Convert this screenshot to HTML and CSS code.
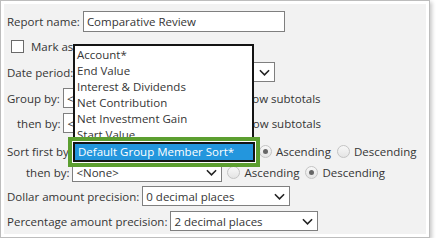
FILE: index.html
```html
<!DOCTYPE html>
<html lang="en">
<head>
  <meta charset="UTF-8" />
  <title>Report Settings</title>
  <link rel="stylesheet" href="styles.css">
</head>
<body>
  <div class="frame">
    <div class="panel">
      <div class="row row-name">
        <span class="label">Report name:</span>
        <div class="field name-field">Comparative Review</div>
      </div>

      <div class="row row-check">
        <span class="checkbox"></span>
        <span class="label">Mark as</span>
      </div>

      <div class="row row-date">
        <span class="label">Date period:</span>
        <div class="field select date-select"><span></span><svg class="chevron" viewBox="0 0 12 7"><path d="M1 1l5 5 5-5"/></svg></div>
      </div>

      <div class="row row-group">
        <span class="label">Group by:</span>
        <div class="field select group-select"><span>&lt;</span><svg class="chevron" viewBox="0 0 12 7"><path d="M1 1l5 5 5-5"/></svg></div>
        <span class="checkbox small-gap"></span>
        <span class="label">Show subtotals</span>
      </div>

      <div class="row row-then1">
        <span class="label indent">then by:</span>
        <div class="field select group-select"><span>&lt;</span><svg class="chevron" viewBox="0 0 12 7"><path d="M1 1l5 5 5-5"/></svg></div>
        <span class="checkbox small-gap"></span>
        <span class="label">Show subtotals</span>
      </div>

      <div class="row row-sort">
        <span class="label">Sort first by:</span>
        <div class="field select sort-select"><span></span><svg class="chevron" viewBox="0 0 12 7"><path d="M1 1l5 5 5-5"/></svg></div>
        <span class="radio checked"></span><span class="label">Ascending</span>
        <span class="radio"></span><span class="label">Descending</span>
      </div>

      <div class="row row-then2">
        <span class="label indent-more">then by:</span>
        <div class="field select then-select"><span>&lt;None&gt;</span><svg class="chevron" viewBox="0 0 12 7"><path d="M1 1l5 5 5-5"/></svg></div>
        <span class="radio"></span><span class="label">Ascending</span>
        <span class="radio checked"></span><span class="label">Descending</span>
      </div>

      <div class="row row-dollar">
        <span class="label">Dollar amount precision:</span>
        <div class="field select precision-select"><span>0 decimal places</span><svg class="chevron" viewBox="0 0 12 7"><path d="M1 1l5 5 5-5"/></svg></div>
      </div>

      <div class="row row-percent">
        <span class="label">Percentage amount precision:</span>
        <div class="field select precision-select"><span>2 decimal places</span><svg class="chevron" viewBox="0 0 12 7"><path d="M1 1l5 5 5-5"/></svg></div>
      </div>
    </div>

    <ul class="droplist">
      <li>Account*</li>
      <li>End Value</li>
      <li>Interest &amp; Dividends</li>
      <li>Net Contribution</li>
      <li>Net Investment Gain</li>
      <li>Start Value</li>
    </ul>

    <div class="highlight">
      <div class="highlight-item">Default Group Member Sort*</div>
    </div>
  </div>
</body>
</html>
```

FILE: styles.css
```css
body {
  margin: 0;
  background: #fff;
  font-family: "Open Sans", "Noto Sans", sans-serif;
  font-size: 11.5px;
  color: #353535;
}

.frame {
  position: relative;
  width: 430px;
  height: 238px;
  border: 1px solid #bdbdbd;
  padding: 3px;
  box-sizing: border-box;
  box-shadow: 2px 2px 4px rgba(0, 0, 0, 0.22);
  background: #fff;
}

.panel {
  background: #f2f2f2;
  height: 100%;
  padding: 7px 0 0 3px;
  box-sizing: border-box;
}

.row {
  display: flex;
  align-items: center;
  height: 20px;
  margin-top: 5px;
  white-space: nowrap;
}

.row-name { height: 21px; margin-top: 0; }
.row-check { margin-top: 4px; }
.row-date { margin-top: 6px; }
.row-group { margin-top: 6px; }
.row-sort { margin-top: 8px; }
.row-then2 { margin-top: 1px; }
.row-dollar { margin-top: 4px; }

.label {
  margin-right: 3px;
}

.indent { margin-left: 10px; }
.indent-more { margin-left: 19px; }

.field {
  height: 100%;
  box-sizing: border-box;
  border: 1px solid #7f7f7f;
  background: #fff;
  display: flex;
  align-items: center;
  padding: 0 4px 0 3px;
}

.name-field { width: 202px; }

.select {
  justify-content: space-between;
}

.chevron {
  width: 11px;
  height: 7px;
  fill: none;
  stroke: #222;
  stroke-width: 1.7;
}

.date-select { width: 199px; }
.group-select { width: 150px; }
.sort-select { width: 181px; margin-right: 3px; }
.then-select { width: 150px; margin-right: 5px; }
.precision-select { width: 148px; }

.checkbox {
  width: 13px;
  height: 13px;
  box-sizing: border-box;
  border: 1px solid #6a6a6a;
  background: #fff;
  margin: 0 7px 0 4px;
}

.small-gap { margin-left: 8px; margin-right: 5px; }

.radio {
  width: 11px;
  height: 11px;
  border-radius: 50%;
  border: 1px solid #c4c4c4;
  background: linear-gradient(#f8f8f8, #e4e4e4);
  margin-right: 4px;
  position: relative;
}

.radio.checked::after {
  content: "";
  position: absolute;
  left: 3px;
  top: 3px;
  width: 5px;
  height: 5px;
  border-radius: 50%;
  background: #666;
}

.radio + .label + .radio {
  margin-left: 3px;
}

.droplist {
  position: absolute;
  left: 72px;
  top: 43px;
  width: 181px;
  height: 117px;
  box-sizing: border-box;
  margin: 0;
  padding: 1px 0 0;
  list-style: none;
  border: 2px solid #141414;
  background: #fff;
}

.droplist li {
  height: 16px;
  line-height: 16px;
  padding-left: 2px;
}

.highlight {
  position: absolute;
  left: 67px;
  top: 136px;
  width: 192px;
  height: 30px;
  box-sizing: border-box;
  border: 4px solid #5c9f30;
  background: #fff;
  padding: 1px;
}

.highlight-item {
  height: 100%;
  box-sizing: border-box;
  border: 2px solid #141414;
  background: #2396dd;
  color: #fff;
  font-size: 11.5px;
  line-height: 16px;
  padding-left: 3px;
}
```
